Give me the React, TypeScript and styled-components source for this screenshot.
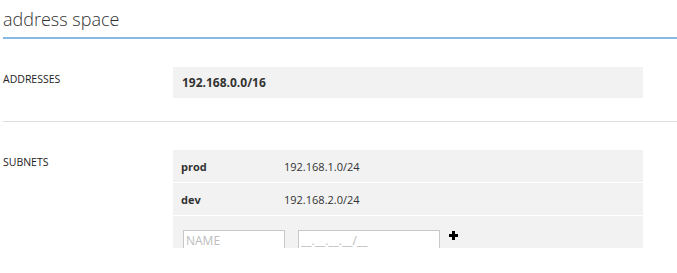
import React from "react"
import styled, { createGlobalStyle } from "styled-components"

const GlobalStyle = createGlobalStyle`
  html, body {
    margin: 0;
    padding: 0;
    background: #fff;
  }
  body {
    font-family: "Open Sans", "Noto Sans", sans-serif;
    color: #333;
  }
`

const Page = styled.div`
  padding-left: 3px;
  width: 674px;
`

const Title = styled.h1`
  margin: 0;
  padding-top: 8px;
  height: 29px;
  font-size: 18px;
  line-height: 22px;
  font-weight: 300;
  color: #333;
  border-bottom: 2px solid #88b8e4;
`

const Section = styled.section<{ $top: number; $bottom: number; $divider?: boolean }>`
  display: grid;
  grid-template-columns: 170px 470px;
  align-items: start;
  padding-top: ${(p) => p.$top}px;
  padding-bottom: ${(p) => p.$bottom}px;
  border-bottom: ${(p) => (p.$divider ? "1px solid #dcdcdc" : "none")};
`

const Label = styled.div`
  font-size: 10.5px;
  line-height: 14px;
  margin-top: 5px;
  text-transform: uppercase;
  color: #222;
`

const ValueBox = styled.div`
  background: #f2f2f2;
  height: 31px;
  display: flex;
  align-items: center;
  padding-left: 9px;
  font-size: 12px;
  font-weight: 700;
  color: #333;
`

const List = styled.div`
  display: flex;
  flex-direction: column;
  gap: 1px;
  height: 98px;
  overflow: hidden;
`

const Row = styled.div`
  background: #f2f2f2;
  height: 32px;
  flex-shrink: 0;
  display: flex;
  align-items: center;
  padding-left: 8px;
`

const Name = styled.div`
  width: 103px;
  font-size: 11px;
  font-weight: 700;
  color: #333;
`

const Range = styled.div`
  font-size: 11px;
  color: #333;
`

const EntryRow = styled.div`
  background: #f2f2f2;
  height: 40px;
  flex-shrink: 0;
  display: flex;
  align-items: flex-start;
  padding: 14px 0 0 10px;
  box-sizing: border-box;
`

const Field = styled.input<{ $w: number; $gap: number }>`
  width: ${(p) => p.$w}px;
  height: 20px;
  box-sizing: border-box;
  margin: 0 ${(p) => p.$gap}px 0 0;
  padding: 0 2px;
  border: 1px solid #c8c8c8;
  background: #fff;
  font-family: "Open Sans", "Noto Sans", sans-serif;
  font-size: 12px;
  color: #333;
  outline: none;
  &::placeholder {
    color: #bdbdbd;
  }
`

const AddButton = styled.button`
  border: 0;
  background: none;
  padding: 0;
  margin-top: 1px;
  width: 9px;
  height: 9px;
  cursor: pointer;
  display: flex;
  svg {
    display: block;
  }
`

const subnets = [
  { name: "prod", range: "192.168.1.0/24" },
  { name: "dev", range: "192.168.2.0/24" },
]

const App = () => (
  <>
    <GlobalStyle />
    <Page>
      <Title>address space</Title>
      <Section $top={28} $bottom={23} $divider>
        <Label>Addresses</Label>
        <ValueBox>192.168.0.0/16</ValueBox>
      </Section>
      <Section $top={28} $bottom={0}>
        <Label>Subnets</Label>
        <List>
          {subnets.map((s) => (
            <Row key={s.name}>
              <Name>{s.name}</Name>
              <Range>{s.range}</Range>
            </Row>
          ))}
          <EntryRow>
            <Field $w={102} $gap={13} placeholder="NAME" />
            <Field $w={142} $gap={9} placeholder="__.__.__.__/__" />
            <AddButton aria-label="add subnet">
              <svg width="9" height="9" viewBox="0 0 9 9">
                <path d="M3 0h3v3h3v3H6v3H3V6H0V3h3z" fill="#000" />
              </svg>
            </AddButton>
          </EntryRow>
        </List>
      </Section>
    </Page>
  </>
)

export default App
